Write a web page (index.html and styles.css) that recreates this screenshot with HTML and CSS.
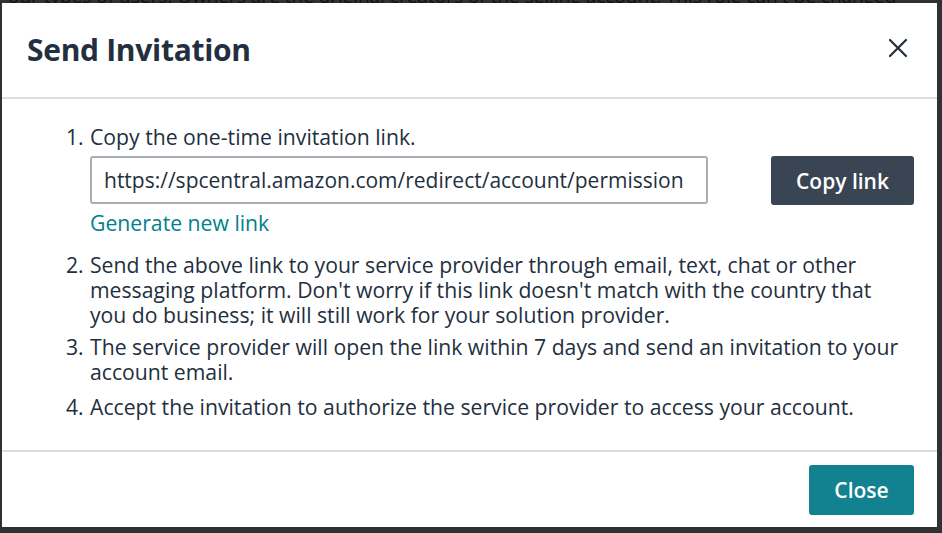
FILE: index.html
```html
<!DOCTYPE html>
<html lang="en">
<head>
    <meta charset="UTF-8">
    <meta name="viewport" content="width=device-width, initial-scale=1.0">
    <title>Send Invitation</title>
    <link rel="stylesheet" href="styles.css">
</head>
<body>
    <div class="page-behind">
        <p>our types of users. Owners are the original creators of the selling account. This role can't be changed</p>
    </div>

    <div class="modal">
        <div class="modal-header">
            <h1>Send Invitation</h1>
            <button class="close-icon" aria-label="Close">
                <svg width="20" height="20" viewBox="0 0 20 20"><path d="M2 2 L18 18 M18 2 L2 18" stroke="#232f3e" stroke-width="2.2" stroke-linecap="round" fill="none"/></svg>
            </button>
        </div>

        <div class="modal-body">
            <div class="step">
                <span class="step-num">1.</span>
                <div class="step-text">
                    Copy the one-time invitation link.
                    <div class="link-row">
                        <input type="text" class="link-input" value="https://spcentral.amazon.com/redirect/account/permission" readonly>
                        <button class="copy-btn">Copy link</button>
                    </div>
                    <a href="#" class="generate-link">Generate new link</a>
                </div>
            </div>
            <div class="step step-2">
                <span class="step-num">2.</span>
                <div class="step-text plain">Send the above link to your service provider through email, text, chat or other messaging platform. Don't worry if this link doesn't match with the country that you do business; it will still work for your solution provider.</div>
            </div>
            <div class="step">
                <span class="step-num">3.</span>
                <div class="step-text plain">The service provider will open the link within 7 days and send an invitation to your account email.</div>
            </div>
            <div class="step step-4">
                <span class="step-num">4.</span>
                <div class="step-text plain">Accept the invitation to authorize the service provider to access your account.</div>
            </div>
        </div>

        <div class="modal-footer">
            <button class="close-btn">Close</button>
        </div>
    </div>
</body>
</html>
```

FILE: styles.css
```css
:root {
    --text-color: #232f3e;
    --teal: #007f8c;
    --teal-btn: #138290;
    --slate: #3a4553;
    --divider: #dedede;
}
* { margin: 0; padding: 0; box-sizing: border-box; font-family: 'Open Sans', sans-serif; }
body { background-color: #2f3133; width: 942px; height: 533px; overflow: hidden; }
.page-behind { height: 3px; overflow: hidden; display: flex; align-items: flex-end; padding-left: 8px; }
.page-behind p { color: #111; font-size: 19px; line-height: 14px; white-space: nowrap; flex-shrink: 0; }
.modal { background-color: #fff; margin-left: 2px; width: 935px; height: 524px; display: flex; flex-direction: column; }
.modal-header { height: 96px; padding: 0 29px 0 25px; display: flex; align-items: center; justify-content: space-between; border-bottom: 2px solid var(--divider); }
h1 { font-size: 30px; font-weight: 700; color: var(--text-color); letter-spacing: -0.3px; margin-top: -2px; }
.close-icon { background: none; border: none; cursor: pointer; display: flex; margin-top: -4px; }
.modal-body { flex: 1; padding: 25px 23px 0 64px; color: var(--text-color); font-size: 21.2px; line-height: 25px; }
.step { display: flex; margin-bottom: 7px; }
.step-2 { margin-top: 17px; }
.step-4 { margin-top: 10px; }
.step-num { width: 24px; flex-shrink: 0; }
.step-text { flex: 1; }
.step-text.plain { padding-right: 9px; }
.link-row { display: flex; justify-content: space-between; margin-top: 7px; }
.link-input { width: 618px; height: 48px; border: 2px solid #a9afb7; border-radius: 3px; padding: 0 12px; font-size: 21px; color: var(--text-color); outline: none; }
.copy-btn { width: 143px; height: 49px; background-color: var(--slate); color: #fff; border: none; border-radius: 3px; font-size: 21px; font-weight: 600; cursor: pointer; }
.generate-link { display: inline-block; margin-top: 5px; color: var(--teal); text-decoration: none; font-weight: 500; }
.modal-footer { border-top: 2px solid var(--divider); padding: 13px 23px 12px; display: flex; justify-content: flex-end; }
.close-btn { width: 105px; height: 50px; background-color: var(--teal-btn); color: #fff; border: none; border-radius: 3px; font-size: 21px; font-weight: 600; cursor: pointer; }
```
